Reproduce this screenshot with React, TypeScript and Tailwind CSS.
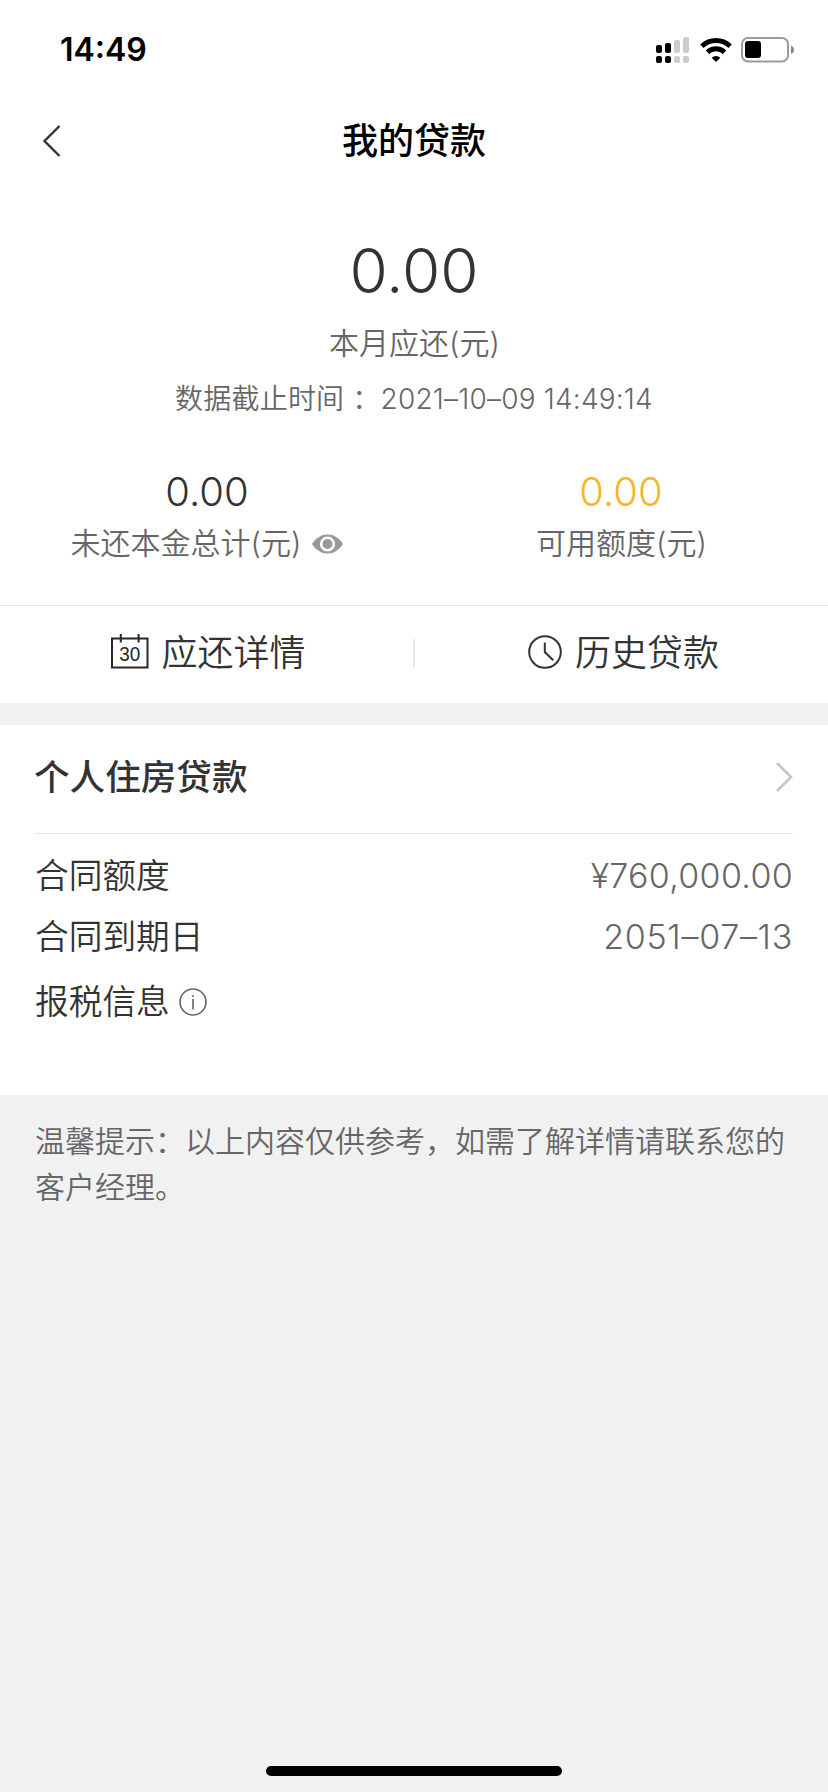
function SignalIcon() {
  return (
    <svg width="34" height="28" viewBox="0 0 34 28">
      <g fill="#000">
        <rect x="0" y="9" width="6" height="8" rx="2" />
        <rect x="9" y="7" width="6" height="10" rx="2" />
        <rect x="0" y="20" width="6" height="7" rx="2" />
        <rect x="9" y="20" width="6" height="7" rx="2" />
      </g>
      <g fill="#ccc">
        <rect x="18" y="4" width="6" height="13" rx="2" />
        <rect x="27" y="1" width="6" height="16" rx="2" />
        <rect x="18" y="20" width="6" height="7" rx="2" />
        <rect x="27" y="20" width="6" height="7" rx="2" />
      </g>
    </svg>
  );
}

function WifiIcon() {
  return (
    <svg width="32" height="24" viewBox="0 0 32 24" fill="none" stroke="#000" strokeWidth="4.8">
      <path d="M1.9 8.2a20.3 20.3 0 0 1 28.2 0" />
      <path d="M7.4 14.2a12.4 12.4 0 0 1 17.2 0" />
      <path d="M16 24l-4.3-4.3a6.3 6.3 0 0 1 8.6 0z" fill="#000" stroke="none" />
    </svg>
  );
}

function BatteryIcon() {
  return (
    <svg width="54" height="26" viewBox="0 0 54 26">
      <rect x="1" y="1" width="46" height="23.5" rx="6" fill="none" stroke="#9b9b9b" strokeWidth="2" />
      <rect x="4" y="4" width="16" height="17" rx="3" fill="#000" />
      <path d="M50 8.5c1.9.8 3 2.2 3 4.3s-1.1 3.5-3 4.3z" fill="#8a8a8a" />
    </svg>
  );
}

function EyeIcon() {
  return (
    <svg width="31" height="20" viewBox="0 0 31 20">
      <path d="M0 10C4 3.7 9.5.5 15.5.5S27 3.7 31 10c-4 6.3-9.5 9.5-15.5 9.5S4 16.3 0 10z" fill="#999" />
      <circle cx="15.5" cy="10" r="6.3" fill="none" stroke="#fff" strokeWidth="2.6" />
    </svg>
  );
}

function CalendarIcon() {
  return (
    <svg width="38" height="36" viewBox="0 0 38 36">
      <path d="M1 4.5h35.5v29H1zM9.8 0v8.5M27.6 0v8.5" fill="none" stroke="#262626" strokeWidth="2" />
      <text x="18.7" y="27" textAnchor="middle" fontSize="21" textLength="21" lengthAdjust="spacingAndGlyphs" fontFamily="Liberation Sans, sans-serif" fill="#262626">30</text>
    </svg>
  );
}

function ClockIcon() {
  return (
    <svg width="34" height="34" viewBox="0 0 34 34" fill="none" stroke="#333" strokeWidth="2">
      <circle cx="17" cy="17" r="15.8" />
      <path d="M16.8 7.5V17l8.4 8.2" />
    </svg>
  );
}

function InfoIcon() {
  return (
    <svg width="28" height="28" viewBox="0 0 28 28" fill="none" stroke="#666" strokeWidth="1.6">
      <circle cx="14" cy="14" r="13" />
      <path d="M14 11v10.5M14 7.3v1.8" />
    </svg>
  );
}

interface DetailRowProps {
  label: string;
  value: string;
  valueClass: string;
}

function DetailRow({ label, value, valueClass }: DetailRowProps) {
  return (
    <div className="flex justify-between leading-10">
      <span className="text-[33.7px]">{label}</span>
      <span className={`text-[34px] text-[#666] ${valueClass}`}>{value}</span>
    </div>
  );
}

export default function App() {
  return (
    <div className="flex h-[1792px] w-[828px] flex-col bg-[#f1f1f1] font-['Inter','Noto_Sans_CJK_SC_DemiLight','Noto_Sans_CJK_SC',sans-serif] font-[350] text-[#333]">
      <div className="bg-white">
        {/* Status bar */}
        <div className="flex h-[100px] items-center justify-between pr-[33px] pl-[60px]">
          <span className="text-[32px] leading-10 font-semibold text-black">14:49</span>
          <div className="flex items-center">
            <SignalIcon />
            <span className="ml-[10px]"><WifiIcon /></span>
            <span className="ml-[9px]"><BatteryIcon /></span>
          </div>
        </div>

        {/* Header */}
        <header className="grid h-[82px] grid-cols-3 items-center px-[42px]">
          <button>
            <svg width="19" height="32" viewBox="0 0 19 32" fill="none" stroke="#333" strokeWidth="2.4">
              <path d="M17.5 1L2.5 16l15 15" />
            </svg>
          </button>
          <h1 className="text-center font-['Inter','Noto_Sans_CJK_SC',sans-serif] text-[36px] leading-[50px] font-medium text-black">我的贷款</h1>
        </header>

        {/* Summary */}
        <section className="pt-[54px] text-center">
          <p className="text-[62px] leading-[70px]">0.00</p>
          <p className="mt-[17px] pl-px text-[30px] leading-10 text-[#666]">本月应还(元)</p>
          <p className="mt-4 text-[28px] leading-10 tracking-[0.2px] text-[#666]">数据截止时间 ：2021–10–09 14:49:14</p>
          <div className="mt-12 grid grid-cols-2">
            <div>
              <p className="text-[40px] leading-[50px]">0.00</p>
              <div className="mt-1.5 flex items-center justify-center text-[30px] leading-10 text-[#666]">
                <span>未还本金总计(元)</span>
                <span className="ml-[11px] pt-px"><EyeIcon /></span>
              </div>
            </div>
            <div>
              <p className="text-[40px] leading-[50px] text-[#f7b52c]">0.00</p>
              <p className="mt-1.5 pl-px text-[30px] leading-10 text-[#666]">可用额度(元)</p>
            </div>
          </div>
        </section>

        {/* Shortcuts */}
        <nav className="mt-[42px] flex h-[98px] items-center border-t border-[#dfdfdf] pb-1">
          <button className="flex w-[413px] items-center justify-center gap-3 pl-1 text-[36px] leading-[50px]">
            <span className="pb-0.5"><CalendarIcon /></span>
            应还详情
          </button>
          <div className="h-7 w-0.5 bg-[#e9e9e9]" />
          <button className="flex w-[413px] items-center justify-center gap-[13px] pl-1 text-[36px] leading-[50px]">
            <span className="pb-0.5"><ClockIcon /></span>
            历史贷款
          </button>
        </nav>
      </div>

      {/* Loan card */}
      <section className="mt-[22px] h-[370px] bg-white px-[35px]">
        <div className="flex h-[109px] items-center justify-between border-b border-[#e0e0e0] pb-1">
          <h2 className="-ml-px pt-0.5 font-['Inter','Noto_Sans_CJK_SC',sans-serif] text-[35.6px] leading-[50px] font-medium">个人住房贷款</h2>
          <svg width="18" height="30" viewBox="0 0 18 30" fill="none" stroke="#c4c4c4" strokeWidth="2.6">
            <path d="M2 1l14 14L2 29" />
          </svg>
        </div>
        <div className="pt-[22px]">
          <DetailRow label="合同额度" value="¥760,000.00" valueClass="tracking-[0.3px]" />
          <div className="mt-[21px]">
            <DetailRow label="合同到期日" value="2051–07–13" valueClass="tracking-[0.7px]" />
          </div>
          <div className="mt-[25px] flex items-center gap-[9px] text-[33.7px] leading-10">
            报税信息
            <InfoIcon />
          </div>
        </div>
      </section>

      {/* Hint */}
      <p className="px-[35px] pt-[23px] text-[30px] leading-[46px] text-[#666]">
        温馨提示：以上内容仅供参考，如需了解详情请联系您的客户经理。
      </p>

      {/* Home indicator */}
      <div className="mx-auto mt-auto mb-4 h-2.5 w-[296px] rounded-full bg-black" />
    </div>
  );
}
